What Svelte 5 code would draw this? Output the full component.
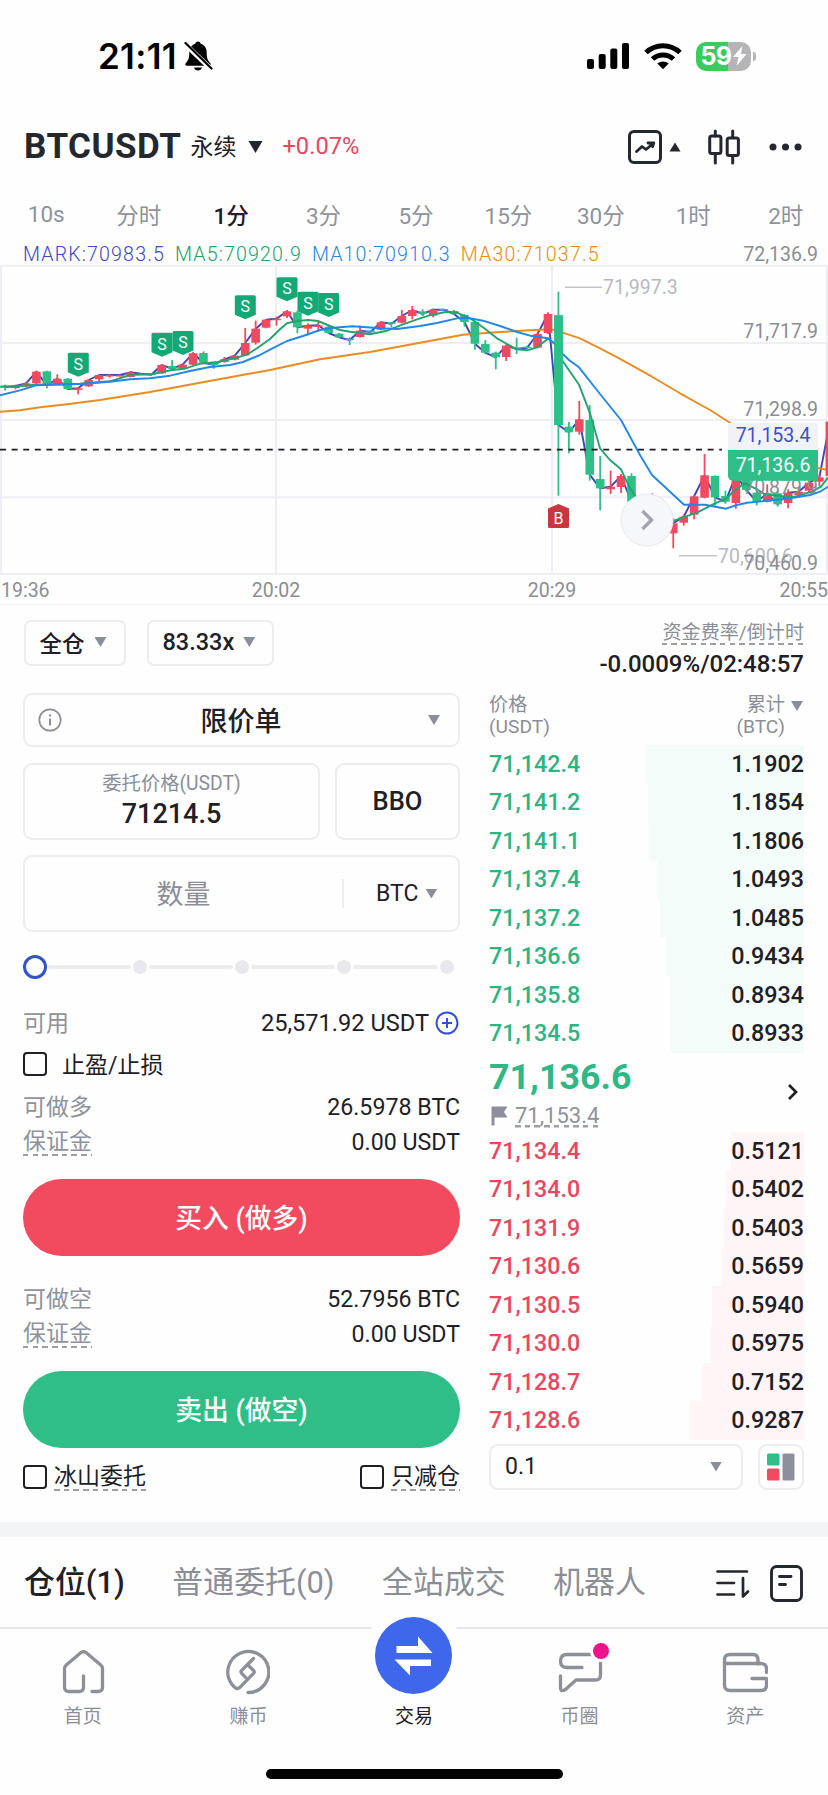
<script>
	const intervals = ["10s", "分时", "1分", "3分", "5分", "15分", "30分", "1时", "2时"];
	let activeInterval = "1分";

	const legend = [
		{ text: "MARK:70983.5", color: "#3f46c4" },
		{ text: "MA5:70920.9", color: "#1fa06c" },
		{ text: "MA10:70910.3", color: "#2b84e0" },
		{ text: "MA30:71037.5", color: "#e88a22" },
	];

	// [direction, high, body top, body bottom, low]
	const candles = [
		["d", 434, 437, 442, 452], ["u", 434, 438, 444, 448], ["u", 427, 430, 440, 442],
		["u", 392, 395, 430, 432], ["d", 392, 394, 436, 445], ["u", 403, 416, 433, 435],
		["d", 414, 416, 447, 449], ["u", 442, 445, 449, 463], ["u", 417, 420, 439, 441],
		["u", 403, 405, 418, 424], ["u", 402, 405, 408, 413], ["u", 403, 405, 407, 409],
		["u", 394, 397, 411, 412], ["u", 400, 401, 403, 404], ["d", 399, 401, 404, 405],
		["u", 372, 375, 400, 402], ["d", 360, 378, 386, 388], ["u", 370, 374, 386, 388],
		["u", 337, 340, 374, 376], ["d", 334, 339, 368, 370], ["d", 366, 370, 374, 386],
		["u", 351, 358, 366, 368], ["u", 345, 347, 359, 361], ["u", 264, 309, 346, 348],
		["u", 242, 266, 308, 314], ["u", 237, 239, 263, 265], ["u", 230, 236, 240, 257],
		["u", 210, 214, 229, 234], ["d", 212, 217, 262, 280], ["u", 250, 257, 266, 286],
		["u", 243, 256, 260, 275], ["d", 256, 260, 279, 281], ["d", 279, 281, 292, 294],
		["d", 292, 296, 300, 315], ["u", 257, 272, 291, 293], ["d", 270, 272, 276, 282],
		["u", 244, 247, 269, 271], ["d", 246, 247, 251, 262], ["u", 210, 228, 248, 250],
		["u", 198, 210, 228, 238], ["d", 208, 214, 222, 228], ["u", 206, 209, 227, 232],
		["d", 206, 207, 209, 210], ["d", 210, 213, 222, 224], ["d", 222, 225, 246, 260],
		["d", 242, 246, 311, 329], ["d", 300, 312, 338, 343], ["d", 335, 338, 352, 388],
		["u", 313, 317, 351, 363], ["d", 293, 323, 327, 342], ["d", 317, 320, 323, 328],
		["u", 278, 282, 323, 325], ["u", 217, 222, 279, 282], ["d", 155, 226, 555, 767],
		["d", 546, 560, 577, 640], ["u", 483, 538, 575, 584], ["d", 495, 540, 704, 722],
		["d", 648, 717, 745, 811], ["u", 692, 740, 748, 762], ["u", 702, 708, 741, 759],
		["d", 700, 708, 785, 800], ["d", 785, 790, 840, 860], ["u", 760, 780, 850, 860],
		["d", 780, 800, 880, 890], ["u", 835, 850, 880, 925], ["u", 824, 830, 848, 857],
		["u", 766, 769, 824, 838], ["u", 642, 706, 773, 775], ["d", 706, 708, 772, 797],
		["d", 752, 768, 785, 791], ["u", 695, 705, 789, 806], ["d", 700, 712, 750, 755],
		["d", 744, 758, 785, 796], ["u", 733, 760, 785, 787], ["d", 752, 760, 793, 800],
		["u", 748, 758, 789, 805], ["u", 745, 755, 765, 771], ["u", 722, 728, 752, 756],
		["u", 703, 712, 725, 738], ["u", 540, 545, 708, 712],
	];

	const ma5 = [
		[0, 440], [15, 439], [36, 434], [60, 433], [80, 431], [110, 424], [130, 405], [152, 402],
		[172, 390], [185, 386], [200, 371], [218, 366], [235, 354], [247, 344], [257, 325], [270, 297],
		[280, 268], [287, 250], [297, 243], [308, 240], [318, 243], [330, 258], [340, 270], [350, 275],
		[370, 283], [387, 272], [403, 253], [420, 235], [432, 224], [447, 215], [457, 218], [470, 235],
		[483, 262], [497, 295], [507, 312], [517, 328], [527, 331], [537, 322], [548, 296], [555, 312],
		[562, 360], [579, 434], [590, 520], [600, 625], [610, 660], [621, 688], [630, 745], [650, 830],
		[674, 842], [683, 832], [697, 818], [715, 790], [726, 776], [735, 750], [745, 730], [755, 745],
		[765, 763], [780, 768], [795, 770], [812, 755], [821, 740], [828, 712],
	];
	const ma10 = [
		[0, 466], [20, 451], [36, 436], [52, 434], [80, 432], [110, 425], [130, 418], [150, 415],
		[170, 407], [190, 393], [210, 381], [230, 375], [243, 366], [260, 345], [270, 329], [287, 303],
		[303, 288], [320, 270], [333, 263], [353, 259], [380, 265], [397, 267], [420, 258], [437, 249],
		[457, 235], [467, 233], [483, 242], [500, 258], [517, 276], [530, 287], [548, 295], [555, 312],
		[563, 343], [569, 360], [579, 382], [600, 462], [621, 540], [640, 645], [652, 705], [684, 794],
		[705, 794], [726, 806], [737, 795], [747, 788], [765, 783], [790, 775], [810, 765], [820, 755],
		[828, 740],
	];
	const ma30 = [
		[0, 515], [20, 511], [40, 502], [67, 493], [100, 480], [150, 456], [200, 428], [230, 412],
		[270, 390], [320, 358], [370, 336], [420, 308], [463, 284], [500, 276], [530, 271], [552, 268],
		[562, 277], [580, 295], [600, 325], [621, 358], [652, 410], [680, 460], [710, 510], [730, 548],
		[780, 650], [818, 684], [828, 690],
	];

	const sells = [
		[78.3, 338], [162, 278], [183, 273], [245.3, 166], [287, 112], [308, 155], [328.7, 159],
	];
	const priceAxis = [
		["71,717.9", 272], ["71,298.9", 507], ["70,879.9", 740], ["70,460.9", 968],
	];

	const cx = (i) => 5.1 + i * 10.44;
	const y = (v) => (v - 66) / 3;
	const path = (pts) => "M" + pts.map(([px, v]) => `${px} ${y(v).toFixed(1)}`).join("L");
	const mark = path(candles.map((c, i) => [cx(i).toFixed(1), c[0] === "u" ? c[2] : c[3]]));

	const greens = [
		["71,142.4", "1.1902", 159], ["71,141.2", "1.1854", 156], ["71,141.1", "1.1806", 155],
		["71,137.4", "1.0493", 147], ["71,137.2", "1.0485", 144], ["71,136.6", "0.9434", 137],
		["71,135.8", "0.8934", 134], ["71,134.5", "0.8933", 134],
	];
	const reds = [
		["71,134.4", "0.5121", 73], ["71,134.0", "0.5402", 78], ["71,131.9", "0.5403", 80],
		["71,130.6", "0.5659", 82], ["71,130.5", "0.5940", 92], ["71,130.0", "0.5975", 93],
		["71,128.7", "0.7152", 102], ["71,128.6", "0.9287", 114],
	];

	const listTabs = ["仓位(1)", "普通委托(0)", "全站成交", "机器人"];
	let activeList = listTabs[0];
</script>

<main>
	<header class="status">
		<div class="clock">
			<span>21:11</span>
			<svg width="30" height="32" viewBox="0 0 30 32">
				<path d="M15 1.5c1.7 0 2.6 1 2.7 2.3 4 1.3 6 4.500 6 9 0 6 1.300 8 3.500 10.200 1 1.200.4 2.700-1.200 2.700H4c-1.600 0-2.200-1.500-1.200-2.700C5 20.800 6.300 18.800 6.300 12.800c0-4.500 2-7.700 6-9 .1-1.300 1-2.300 2.700-2.300z" />
				<path d="M11 27.500h8c-.5 2-2 3-4 3s-3.500-1-4-3z" />
				<path d="M1.500 3.500 28 29" stroke="#fff" stroke-width="5" />
				<path d="M2.500 3 28.500 28.500" stroke="#000" stroke-width="2.200" stroke-linecap="round" />
			</svg>
		</div>
		<div class="signals">
			<svg width="43" height="28" viewBox="0 0 43 28">
				<rect x="0" y="17" width="7" height="10" rx="2" />
				<rect x="11.700" y="12" width="7" height="15" rx="2" />
				<rect x="23.300" y="6.500" width="7" height="20.500" rx="2" />
				<rect x="35" y="1" width="7" height="26" rx="2" />
			</svg>
			<svg width="38" height="28" viewBox="0 0 38 28" fill="none" stroke="#000" stroke-width="5">
				<path d="M2 10.500a24.500 24.500 0 0 1 34 0" />
				<path d="M8.500 17a15.500 15.500 0 0 1 21 0" />
				<path d="M19 27.300l-5.700-5.700a8.500 8.500 0 0 1 11.400 0z" fill="#000" stroke="none" />
			</svg>
			<div class="battery">
				<span class="level"><span>59</span>
					<svg width="14" height="20" viewBox="0 0 14 20"><path d="M9.500 0 0 11h5.500L3.500 20 13.500 8H8z" fill="#fff" /></svg>
				</span>
				<i></i>
			</div>
		</div>
	</header>

	<section class="pair">
		<h1>BTCUSDT</h1>
		<span class="kind">永续</span>
		<svg class="pair-arrow" width="15" height="12" viewBox="0 0 15 12"><path d="M0.500 0h14L7.500 12z" fill="#24272e" /></svg>
		<span class="change">+0.07%</span>
		<div class="tools">
			<svg width="34" height="34" viewBox="0 0 34 34" fill="none" stroke="#24272e" stroke-width="3" stroke-linejoin="round" stroke-linecap="round">
				<rect x="1.500" y="1.500" width="31" height="31" rx="4.500" />
				<path d="M8.500 21.500l5.500-5 4 3 7-6M20 13h5.800l-1.300 3.800" stroke-width="2.800" />
			</svg>
			<svg class="tri-up" width="12" height="10" viewBox="0 0 12 10"><path d="M6 .5 11.500 9.500H.5z" fill="#24272e" /></svg>
			<svg class="bars" width="32" height="36" viewBox="0 0 32 36" fill="none" stroke="#24272e" stroke-width="3" stroke-linecap="round">
				<path d="M7.300 2v5M7.300 25v9M24.700 2v6M24.700 28v6" />
				<rect x="1.700" y="7" width="11.200" height="17.500" rx="2" />
				<rect x="19.200" y="9" width="11.200" height="17.500" rx="2" />
			</svg>
			<svg width="33" height="8" viewBox="0 0 33 8" fill="#24272e">
				<circle cx="4" cy="4" r="3.500" /><circle cx="16.500" cy="4" r="3.500" /><circle cx="29" cy="4" r="3.500" />
			</svg>
		</div>
	</section>

	<nav class="intervals">
		{#each intervals as name}
			<span class:active={name === activeInterval}>{name}</span>
		{/each}
	</nav>

	<div class="legend">
		{#each legend as item}
			<span style="color: {item.color}">{item.text}</span>
		{/each}
		<span class="top-price">72,136.9</span>
	</div>

	<svg class="chart" width="828" height="344" viewBox="0 0 828 344">
		<g stroke="#eeeef6" stroke-width="2">
			{#each [77, 309, 540, 772, 1002] as v}
				<line x1="0" x2="828" y1={y(v)} y2={y(v)} />
			{/each}
			{#each [1, 276, 552, 827] as x}
				<line x1={x} x2={x} y1={y(77)} y2={y(1002)} />
			{/each}
		</g>
		<line x1="0" x2="828" y1="342.500" y2="342.500" stroke="#f5f5fa" stroke-width="2" />

		<g fill="none" stroke-width="1.900" stroke-linejoin="round">
			<path d={mark} stroke="#3b46bd" />
			<path d={path(ma30)} stroke="#ea8c22" />
		</g>
		{#each candles as [dir, high, top, bottom, low], i}
			<g fill={dir === "u" ? "#ef4a60" : "#2fbe87"}>
				<rect x={cx(i) - 0.9} y={y(high)} width="1.800" height={(low - high) / 3} />
				<rect x={cx(i) - 4.3} y={y(top)} width="8.600" height={Math.max(1.5, (bottom - top) / 3)} />
			</g>
		{/each}
		<g fill="none" stroke-width="1.900" stroke-linejoin="round">
			<path d={path(ma5)} stroke="#26a26f" />
			<path d={path(ma10)} stroke="#2487e6" />
		</g>
		<rect x="554.300" y={y(226)} width="8.600" height={329 / 3} fill="#2fbe87" />

		<line x1="0" x2="722" y1={y(629)} y2={y(629)} stroke="#1c1e22" stroke-width="1.900" stroke-dasharray="6 5.600" />

		{#each sells as [x, v]}
			<g transform="translate({x} {y(v)})">
				<path d="M-10.500 1.500a1.500 1.500 0 0 1 1.500-1.500h18a1.500 1.500 0 0 1 1.500 1.500V19.500L0 24-10.500 19.500z" fill="#14a974" />
				<text class="flag-text" y="17" text-anchor="middle">S</text>
			</g>
		{/each}
		<g transform="translate(558.500 {y(792)})">
			<path d="M0 0 10.500 4.500V22.500a1.500 1.500 0 0 1-1.500 1.500h-18a1.500 1.500 0 0 1-1.500-1.500V4.500z" fill="#c9363d" />
			<text class="flag-text" y="19.500" text-anchor="middle">B</text>
		</g>

		<g class="extreme">
			<line x1="565" x2="602" y1={y(142)} y2={y(142)} stroke="#c3c5cb" stroke-width="1.500" />
			<text x="603" y={y(142) + 7}>71,997.3</text>
			<line x1="679" x2="717" y1={y(947)} y2={y(947)} stroke="#c3c5cb" stroke-width="1.500" />
			<text x="718" y={y(947) + 7}>70,600.6</text>
		</g>
		<g class="axis">
			{#each priceAxis as [label, v]}
				<text x="818" y={y(v) + 7} text-anchor="end">{label}</text>
			{/each}
			<text x="1" y="335">19:36</text>
			<text x="276" y="335" text-anchor="middle">20:02</text>
			<text x="552" y="335" text-anchor="middle">20:29</text>
			<text x="828" y="335" text-anchor="end">20:55</text>
		</g>

		<path d="M728 {y(630)}V{y(548) + 3}a3 3 0 0 1 3-3H815a3 3 0 0 1 3 3V{y(630)}z" fill="#f0f2f6" />
		<path d="M728 {y(630)}H818V{y(722)}H733a5 5 0 0 1-5-5z" fill="#2fbe87" />
		<text class="tag" x="773" y={y(584) + 7} text-anchor="middle" fill="#3b50cf">71,153.4</text>
		<text class="tag" x="773" y={y(676) + 7} text-anchor="middle" fill="#fff">71,136.6</text>

		<circle cx="647" cy={y(840)} r="26" fill="#f6f7fb" stroke="#e7e9f2" />
		<path d="M642.500 {y(840) - 9}l9 9-9 9" fill="none" stroke="#a0a3b2" stroke-width="3.400" />
	</svg>

	<section class="modes">
		<button class="box">全仓 <i class="down"></i></button>
		<button class="box">83.33x <i class="down"></i></button>
		<div class="funding">
			<span class="dotted">资金费率/倒计时</span>
			<strong>-0.0009%/02:48:57</strong>
		</div>
	</section>

	<section class="trade">
		<div class="form">
			<div class="box order-type">
				<svg width="24" height="24" viewBox="0 0 24 24" fill="none" stroke="#8b8e96" stroke-width="1.700">
					<circle cx="12" cy="12" r="10.700" /><path d="M12 10.500v7M12 6.500v2" stroke-width="2" />
				</svg>
				<span>限价单</span>
				<i class="down"></i>
			</div>
			<div class="price-row">
				<div class="box price">
					<small>委托价格(USDT)</small>
					<b>71214.5</b>
				</div>
				<div class="box bbo">BBO</div>
			</div>
			<div class="box amount">
				<span class="hint">数量</span>
				<span class="unit">BTC <i class="down"></i></span>
			</div>
			<div class="slider">
				<i class="knob"></i>
				{#each [1, 2, 3, 4] as n}
					<i class="track"></i><i class="dot"></i>
				{/each}
			</div>

			<div class="row available">
				<span>可用</span>
				<b>25,571.92 USDT
					<svg width="24" height="24" viewBox="0 0 24 24" fill="none" stroke="#3350d8" stroke-width="2">
						<circle cx="12" cy="12" r="10.500" /><path d="M12 7v10M7 12h10" />
					</svg>
				</b>
			</div>
			<label class="check tpsl"><i class="tick"></i><span>止盈/止损</span></label>
			<div class="row max"><span>可做多</span><b>26.5978 BTC</b></div>
			<div class="row margin"><span class="dotted">保证金</span><b>0.00 USDT</b></div>
			<button class="submit buy">买入 (做多)</button>
			<div class="row max"><span>可做空</span><b>52.7956 BTC</b></div>
			<div class="row margin"><span class="dotted">保证金</span><b>0.00 USDT</b></div>
			<button class="submit sell">卖出 (做空)</button>
			<div class="options">
				<label class="check"><i class="tick"></i><span class="dotted">冰山委托</span></label>
				<label class="check"><i class="tick"></i><span class="dotted">只减仓</span></label>
			</div>
		</div>

		<div class="book">
			<div class="book-head">
				<span>价格<br />(USDT)</span>
				<span class="total">累计<br />(BTC)</span>
				<i class="down"></i>
			</div>
			{#each greens as [price, total, width]}
				<div class="level-row up">
					<span>{price}</span><b>{total}</b>
					<i class="depth" style="width: {width}px"></i>
				</div>
			{/each}
			<div class="last">
				<div>
					<strong>71,136.6</strong>
					<div class="mark-price">
						<svg width="17" height="20" viewBox="0 0 17 20"><path d="M0.500 0.500H16.500L13 6l3.500 5.500H3.500V19.500h-3z" fill="#8d909c" /></svg>
						<span class="dotted">71,153.4</span>
					</div>
				</div>
				<svg width="12" height="18" viewBox="0 0 12 18"><path d="M2 2l7 7-7 7" fill="none" stroke="#1e2026" stroke-width="2.700" /></svg>
			</div>
			{#each reds as [price, total, width]}
				<div class="level-row down-side">
					<span>{price}</span><b>{total}</b>
					<i class="depth" style="width: {width}px"></i>
				</div>
			{/each}
			<div class="book-foot">
				<div class="box step"><span>0.1</span><i class="down"></i></div>
				<div class="box layout">
					<svg width="28" height="28" viewBox="0 0 28 28">
						<rect x="0" y="0.500" width="12.500" height="12" rx="1.500" fill="#2fbe87" />
						<rect x="0" y="15.500" width="12.500" height="12" rx="1.500" fill="#f24a5e" />
						<rect x="15.500" y="0.500" width="12" height="27" rx="1.500" fill="#8d909c" />
					</svg>
				</div>
			</div>
		</div>
	</section>

	<div class="band"></div>

	<section class="lists">
		{#each listTabs as tab}
			<span class:active={tab === activeList}>{tab}</span>
		{/each}
		<div class="list-tools">
			<svg width="34" height="30" viewBox="0 0 34 30" fill="none" stroke="#24272e" stroke-width="2.700" stroke-linecap="round" stroke-linejoin="round">
				<path d="M1.500 2.500H31M1.500 14H18M1.500 25.500H18M27 9V27.500l5-5" />
			</svg>
			<svg width="33" height="37" viewBox="0 0 33 37" fill="none" stroke="#24272e" stroke-width="2.900" stroke-linecap="round">
				<rect x="1.500" y="1.500" width="30" height="34" rx="5" />
				<path d="M9.500 11.500H21M9.500 19.500H15.500" />
			</svg>
		</div>
	</section>

	<footer>
		<div class="nav-item">
			<svg width="44" height="46" viewBox="0 0 44 46">
				<path d="M22.500 27v11q0 4.500-4.500 4.500H8q-4.500 0-4.500-4.500V19.500q0-2 1.500-3.300L20 3.600q2.500-2 5 0L40 16.200q1.500 1.300 1.500 3.300V38q0 4.500-4.500 4.500H31" />
			</svg>
			<span>首页</span>
		</div>
		<div class="nav-item">
			<svg width="44" height="46" viewBox="0 0 44 46">
				<path d="M22 43.500a20.500 20.500 0 1 0-16.300-8.500q4.500 6.500 8 3.600L27.500 24.300q1.400-1.400 0-2.800L23 17q-1.500-1.500-3 0l-4.300 4.300q-1.500 1.500 0 3l4.800 5M20 17l7.500-7.500" />
			</svg>
			<span>赚币</span>
		</div>
		<div class="nav-item current">
			<div class="hump">
				<div class="swap">
					<svg width="40" height="40" viewBox="0 0 40 40">
						<path d="M2.500 10H24V.5L38.500 17H2.500zM37 23.500H.5L16 39.500V30H37z" />
					</svg>
				</div>
			</div>
			<span>交易</span>
		</div>
		<div class="nav-item">
			<div class="badge-wrap">
				<svg width="46" height="46" viewBox="0 0 46 46">
					<path d="M34 5.500H10Q3.500 5.500 3.500 12t6.500 6.500H25M43.500 12V26q0 5-5 5H19L8.500 40.500q-5 3-5-2V27" />
				</svg>
				<i class="badge"></i>
			</div>
			<span>币圈</span>
		</div>
		<div class="nav-item">
			<svg width="46" height="46" viewBox="0 0 46 46">
				<path d="M2.500 14.500V11q0-5.500 5.500-5.500H31q5 0 5 5.500v4M2.500 14.500H39q5.500 0 5.500 5.500v3.500M2.500 14.500V36q0 5.500 5.500 5.500H39q5.500 0 5.500-5.500V29.500H30" />
			</svg>
			<span>资产</span>
		</div>
	</footer>
	<div class="home-bar"></div>
</main>

<style>
	:global(body) {
		background: #fff;
	}
	main {
		width: 828px;
		height: 1795px;
		overflow: hidden;
		display: flex;
		flex-direction: column;
		background: #fefefe;
		color: #1e2026;
		font-family: Roboto, "Noto Sans CJK SC", sans-serif;
		font-size: 23px;
	}
	svg {
		display: block;
		flex: none;
	}
	button {
		font: inherit;
		color: inherit;
		padding: 0;
	}
	b {
		font-weight: 400;
	}
	i {
		display: block;
		flex: none;
	}
	.status {
		height: 112px;
		box-sizing: border-box;
		padding: 0 72px 0 98px;
		display: flex;
		align-items: center;
		justify-content: space-between;
	}
	.clock {
		display: flex;
		align-items: center;
		gap: 6px;
		color: #000;
		font: 600 35px/40px Inter, sans-serif;
		letter-spacing: 0.3px;
	}
	.signals {
		display: flex;
		align-items: center;
		gap: 14px;
	}
	.battery {
		display: flex;
		align-items: center;
		gap: 2px;
	}
	.battery > i {
		width: 3px;
		height: 9px;
		border-radius: 0 3px 3px 0;
		background: #b5b5b7;
	}
	.level {
		width: 55px;
		height: 29px;
		border-radius: 10px;
		background: linear-gradient(90deg, #3acb5c 58%, #b5b5b7 58%);
		display: flex;
		align-items: center;
		justify-content: center;
		gap: 1px;
		color: #fff;
		font: 700 25px/29px Inter, sans-serif;
		letter-spacing: -0.6px;
	}
	.pair {
		height: 69px;
		display: flex;
		align-items: center;
		padding: 0 26px 0 24px;
	}
	h1 {
		margin: 0 9px 0 0;
		font-size: 35px;
		font-weight: 700;
		letter-spacing: 0.5px;
		color: #24272e;
	}
	.kind {
		margin-top: -3px;
	}
	.pair-arrow {
		margin: 0 19px 0 12px;
	}
	.change {
		margin-top: -1px;
		color: #e8475f;
		font-size: 23.700px;
	}
	.tools {
		margin-left: auto;
		display: flex;
		align-items: center;
	}
	.tri-up {
		margin: 0 27px 0 7px;
	}
	.bars {
		margin-right: 29px;
	}
	.intervals {
		height: 59px;
		margin-top: 3px;
		margin-right: -4px;
		display: flex;
		align-items: center;
		color: #8f929a;
		font-size: 22.5px;
	}
	.intervals span {
		flex: 1;
		text-align: center;
	}
	.intervals .active {
		color: #1e2026;
		font-weight: 500;
	}
	.legend {
		height: 19px;
		display: flex;
		gap: 10px;
		padding: 0 10px 0 23px;
		line-height: 24px;
		font-size: 19.600px;
		font-weight: 300;
		letter-spacing: 1.150px;
	}
	.top-price {
		margin-left: auto;
		color: #8a8d95;
		font-size: 19.500px;
		font-weight: 400;
		letter-spacing: 0;
	}
	.extreme {
		font-size: 19.500px;
		fill: #b7b9c0;
	}
	.axis {
		font-size: 19.500px;
		fill: #8a8d95;
	}
	.tag {
		font-size: 19.500px;
	}
	.flag-text {
		font: 400 16px Roboto, sans-serif;
		fill: #fff;
	}
	.box {
		box-sizing: border-box;
		border: 2px solid #ededf0;
		border-radius: 9px;
		background: #fefefe;
	}
	.down {
		width: 12px;
		height: 10px;
		background: #8b8e98;
		clip-path: polygon(0 0, 100% 0, 50% 100%);
	}
	.dotted {
		background: repeating-linear-gradient(90deg, #9c9ea6 0 5.500px, transparent 5.500px 9.700px) bottom / 100% 2.500px no-repeat;
	}
	.modes {
		height: 87px;
		box-sizing: border-box;
		padding: 14px 24px 0 23.500px;
		display: flex;
		gap: 21px;
		align-items: flex-start;
	}
	.modes .box {
		height: 46px;
		padding: 0 17px 2px 14px;
		display: flex;
		align-items: center;
		gap: 10px;
		font-weight: 500;
		font-size: 22.500px;
		border-radius: 7px;
	}
	.modes .box:nth-child(2) {
		font-size: 23.500px;
		gap: 9px;
	}
	.funding {
		margin-left: auto;
		padding-top: 1px;
		display: flex;
		flex-direction: column;
		align-items: flex-end;
	}
	.funding span {
		height: 24px;
		line-height: 23px;
		font-size: 19.100px;
		color: #8b8e96;
	}
	.funding strong {
		margin-top: 5px;
		font-weight: 500;
		font-size: 24px;
		line-height: 28px;
	}
	.trade {
		display: flex;
		justify-content: space-between;
		padding: 0 24px 0 23px;
		height: 829px;
	}
	.form {
		width: 437px;
	}
	.order-type {
		height: 54px;
		padding: 0 18px 0 13px;
		display: flex;
		align-items: center;
		justify-content: space-between;
		font-size: 27px;
		font-weight: 500;
	}
	.order-type span {
		margin: -2px 8px 0 0;
	}
	.price-row {
		margin-top: 16px;
		display: flex;
		gap: 15px;
	}
	.price {
		width: 297px;
		height: 77px;
		display: flex;
		flex-direction: column;
		align-items: center;
		padding-top: 5px;
	}
	.price small {
		font-size: 19.300px;
		line-height: 28px;
		color: #8b8e96;
	}
	.price b {
		font-size: 27px;
		font-weight: 500;
		line-height: 32px;
	}
	.bbo {
		flex: 1;
		padding-bottom: 2px;
		display: grid;
		place-items: center;
		font-size: 25.500px;
		font-weight: 500;
	}
	.amount {
		margin-top: 15px;
		height: 77px;
		display: flex;
		align-items: center;
		font-size: 27px;
	}
	.hint {
		flex: 1;
		margin-top: -3px;
		text-align: center;
		color: #8b8e96;
	}
	.unit {
		width: 116px;
		height: 29px;
		box-sizing: border-box;
		padding-left: 32px;
		border-left: 2px solid #ededf0;
		display: flex;
		align-items: center;
		gap: 7px;
		font-size: 23px;
	}
	.slider {
		height: 24px;
		margin-top: 23px;
		padding-right: 6.500px;
		display: flex;
		align-items: center;
		gap: 2px;
	}
	.knob {
		width: 24px;
		height: 24px;
		margin-right: -2px;
		box-sizing: border-box;
		border: 3px solid #3352cf;
		border-radius: 50%;
	}
	.track {
		flex: 1;
		height: 4px;
		border-radius: 2px;
		background: #ececef;
	}
	.dot {
		width: 14px;
		height: 14px;
		border-radius: 50%;
		background: #e9e9ed;
	}
	.row {
		display: flex;
		align-items: center;
		justify-content: space-between;
		height: 34px;
	}
	.row span {
		margin-top: -4px;
		color: #8f929a;
		font-size: 23px;
	}
	.row b {
		font-size: 23.200px;
	}
	.available {
		margin-top: 27px;
		padding-right: 1px;
	}
	.row.available b {
		display: flex;
		align-items: center;
		gap: 6px;
		font-size: 23.600px;
	}
	.check {
		display: flex;
		align-items: center;
		gap: 7px;
		font-size: 23px;
	}
	.tick {
		width: 24px;
		height: 24px;
		box-sizing: border-box;
		border: 2px solid #1e2026;
		border-radius: 4px;
	}
	.tpsl {
		margin-top: 7px;
		height: 34px;
		gap: 15px;
	}
	.tpsl span {
		margin-top: -2px;
	}
	.max {
		margin-top: 9px;
	}
	.margin {
		height: 35px;
	}
	.dotted {
		line-height: 28px;
	}
	.row.margin .dotted {
		margin-top: 1px;
	}
	.submit {
		display: block;
		width: 100%;
		height: 77px;
		margin-top: 20px;
		padding-bottom: 3px;
		border: 0;
		border-radius: 39px;
		color: #fff;
		font-size: 26.800px;
		font-weight: 500;
	}
	.buy {
		background: #f24a5e;
	}
	.buy + .max {
		margin-top: 26px;
	}
	.sell {
		background: #2fbe87;
	}
	.options {
		height: 30px;
		margin-top: 14px;
		display: flex;
		justify-content: space-between;
		align-items: center;
	}
	.book {
		width: 315px;
	}
	.book-head {
		height: 51.500px;
		box-sizing: border-box;
		padding-top: 1px;
		display: flex;
		font-size: 19.200px;
		line-height: 22px;
		color: #8b8e96;
	}
	.book-head .total {
		margin-left: auto;
		text-align: right;
	}
	.book-head .down {
		margin: 7px 1px 0 6px;
	}
	.level-row {
		height: 38.500px;
		position: relative;
		display: flex;
		align-items: center;
		justify-content: space-between;
		font-size: 23.300px;
		font-weight: 500;
		isolation: isolate;
	}
	.level-row b {
		font-weight: 500;
	}
	.level-row span {
		color: #2fb380;
	}
	.down-side span {
		color: #e8475f;
	}
	.depth {
		position: absolute;
		right: 0;
		top: 0;
		bottom: 0;
		z-index: -1;
		background: #f3fcf9;
	}
	.down-side .depth {
		background: #fff5f6;
	}
	.last {
		height: 79px;
		display: flex;
		align-items: center;
		justify-content: space-between;
		padding-right: 5px;
	}
	.last strong {
		display: block;
		font-size: 35.800px;
		line-height: 40px;
		color: #2fb885;
	}
	.mark-price {
		display: flex;
		align-items: center;
		gap: 7px;
		margin-top: 7px;
		padding-left: 2px;
		font-size: 22px;
		color: #8f929a;
	}
	.mark-price span {
		line-height: 24px;
	}
	.book-foot {
		margin-top: 4px;
		display: flex;
		justify-content: space-between;
	}
	.step {
		width: 254px;
		height: 46px;
		padding: 0 19px 0 14px;
		display: flex;
		align-items: center;
		justify-content: space-between;
	}
	.layout {
		width: 46px;
		height: 46px;
		display: grid;
		place-items: center;
	}
	.band {
		height: 15px;
		flex: none;
		background: #f3f4f6;
	}
	.lists {
		height: 91.500px;
		flex: none;
		box-sizing: border-box;
		padding: 0 25px 0 24px;
		border-bottom: 2px solid #e6e7ec;
		display: flex;
		align-items: center;
		gap: 47.500px;
		font-size: 30.900px;
		color: #8b8e96;
	}
	.lists span {
		margin-top: -4px;
		white-space: nowrap;
	}
	.lists .active {
		color: #1e2026;
		font-weight: 500;
	}
	.list-tools {
		margin: 4px 0 0 auto;
		display: flex;
		align-items: center;
		gap: 20px;
	}
	footer {
		height: 140px;
		flex: none;
		display: flex;
		position: relative;
		background: #fefefe;
	}
	.nav-item {
		flex: 1;
		display: flex;
		flex-direction: column;
		align-items: center;
		padding-top: 20px;
		font-size: 19px;
		line-height: 26px;
		color: #8b8e96;
	}
	.nav-item > span {
		margin-top: 9px;
	}
	.nav-item > svg,
	.badge-wrap svg {
		fill: none;
		stroke: #8d9097;
		stroke-width: 3.300;
		stroke-linecap: round;
		stroke-linejoin: round;
	}
	.current {
		color: #1e2026;
		padding-top: 0;
	}
	.nav-item.current > span {
		margin-top: -3px;
	}
	.hump {
		width: 102px;
		height: 102px;
		margin-top: -24px;
		border-radius: 50%;
		background: #fefefe;
		display: grid;
		place-items: center;
	}
	.swap {
		width: 77px;
		height: 77px;
		border-radius: 50%;
		background: #3f67ec;
		display: grid;
		place-items: center;
	}
	.swap svg {
		fill: #fff;
	}
	.badge-wrap {
		position: relative;
	}
	.badge {
		position: absolute;
		right: -9px;
		top: -9px;
		width: 16px;
		height: 16px;
		border: 3px solid #fefefe;
		border-radius: 50%;
		background: #f0148c;
	}
	.home-bar {
		width: 297px;
		height: 10px;
		flex: none;
		border-radius: 5px;
		background: #000;
		align-self: center;
	}
</style>
